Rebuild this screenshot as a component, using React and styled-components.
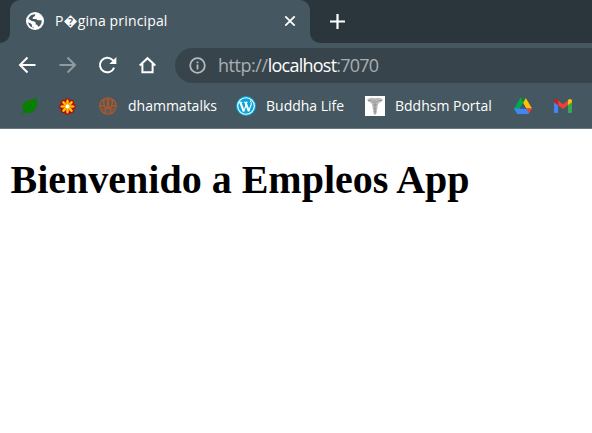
import React from 'react';
import styled, { createGlobalStyle } from 'styled-components';

const Global = createGlobalStyle`
  * { box-sizing: border-box; }
  html, body { margin: 0; background: #fff; overflow: hidden; }
  svg { display: block; flex: none; overflow: visible; }
`;

const Window = styled.div`
  width: 592px;
  height: 433px;
  display: flex;
  flex-direction: column;
  background: #fff;
  font-family: 'Open Sans', 'Noto Sans', sans-serif;
  color: #fff;
`;
const TabStrip = styled.header`
  height: 43px;
  flex: none;
  display: flex;
  background: #455760;
`;
const StripEdge = styled.div`
  width: 10px;
  background: #2b363c;
  border-bottom-right-radius: 10px;
`;
const TabBack = styled.div`
  width: 300px;
  background: linear-gradient(#2b363c 20px, #455760 20px);
`;
const Tab = styled.div`
  height: 43px;
  display: flex;
  align-items: center;
  padding: 0 13px 1px 16px;
  background: #455760;
  border-radius: 10px 10px 0 0;
`;
const StripRest = styled.div`
  flex: 1;
  display: flex;
  align-items: center;
  padding: 0 0 1px 20px;
  background: #2b363c;
  border-bottom-left-radius: 10px;
`;
const Label = styled.span`
  font-size: 14px;
  line-height: 20px;
  white-space: nowrap;
  width: ${p => p.$w}px;
  margin-left: ${p => p.$gap}px;
  letter-spacing: ${p => p.$track || 0}px;
`;
const Spacer = styled.div`flex: 1;`;
const Toolbar = styled.nav`
  height: 45px;
  flex: none;
  display: flex;
  align-items: center;
  padding-left: 17px;
  background: #455760;
`;
const NavButton = styled.button`
  width: 20px;
  height: 20px;
  margin: 0 20px 1px 0;
  padding: 0;
  border: 0;
  background: none;
  color: ${p => (p.$dim ? '#909ba1' : '#fff')};
`;
const AddressBar = styled.div`
  flex: 1;
  height: 35px;
  margin-left: -2px;
  display: flex;
  align-items: center;
  padding-left: 14px;
  background: #38444b;
  border-radius: 18px 0 0 18px;
`;
const Url = styled.span`
  margin-left: 12px;
  padding-bottom: 1px;
  font-size: 18px;
  line-height: 24px;
  color: #a8afb3;
  letter-spacing: -0.45px;
  white-space: nowrap;
`;
const Host = styled.span`
  color: #fff;
  letter-spacing: -0.75px;
`;
const Port = styled.span`letter-spacing: -0.8px;`;
const Bookmarks = styled.div`
  height: 41px;
  flex: none;
  display: flex;
  align-items: center;
  padding: 0 0 4px 20px;
  background: #455760;
  border-bottom: 1px solid #6a7980;
`;
const Bookmark = styled.div`
  display: flex;
  align-items: center;
  margin-right: ${p => p.$after}px;
`;
const Page = styled.main`
  flex: 1;
  padding: 27px 0 0 10.5px;
  color: #000;
`;
const Title = styled.h1`
  margin: 0;
  font: bold 40px/48px 'Liberation Serif', serif;
  white-space: nowrap;
`;

const Globe = () => (
  <svg width="18" height="18" viewBox="0 0 18 18">
    <circle cx="9" cy="9" r="9" fill="#fff" />
    <path fill="#455760" d="M9 2.2C9.7 3 9 4.2 7.8 4.7L6.8 5.3V7H9.4C11 7 11 8 12 8.3H15.6C16 11 14.7 13.2 12.7 14.8 11.6 14.6 12 13.4 11.3 13L9.5 12.3C9.4 11.3 8.7 10.3 7.4 9.6L2.2 8.5C2.4 5 5.2 2.2 9 2.2ZM2.3 10.2L5.7 11.8V13.2L8 14.2V15.7C5 15.4 2.5 13.4 2.3 10.2Z" />
    <path fill="#fff" d="M2.4 6.7 6.2 9.2 8 9.4 9.8 10.6 9.2 12.8 7.3 15.4 6 14.8 6.2 12.6 2 9.4ZM10.1 2.2 9.3 4.9 11 6.3 12.8 7.1 15.6 7.2C15.1 4.7 12.8 2.5 10.1 2.2Z" />
  </svg>
);
const Leaf = () => (
  <svg width="18" height="19" viewBox="0 0 18 19">
    <path fill="#078000" d="M16.6 0C16.4 3.5 17.8 6.5 16.7 9.2 15.8 11.8 14 14 11.8 15.4 9.6 16.5 7.2 16.2 5.4 15.6 4 16.2 2 18 .3 18.7L0 17.7C1.4 17 2.8 16.2 3.9 14.9 2.2 12.2 1.8 9 3 6.6 4.6 3.6 8 3.7 11.2 2.9 13.4 2.3 15 1.5 16.6 0Z" />
    <path stroke="#16601a" strokeWidth=".6" fill="none" d="M4.2 15.2Q8.5 12.3 11.5 8" />
  </svg>
);
const petals = [0, 45, 90, 135, 180, 225, 270, 315];
const Flower = () => (
  <svg width="17" height="17" viewBox="-8.5 -8.5 17 17">
    {petals.map(a => <ellipse key={a} transform={`rotate(${a})`} cy="-5.4" rx="2.6" ry="2.9" fill="#b50808" />)}
    <circle r="6" fill="#b50808" />
    {petals.map(a => <ellipse key={a} transform={`rotate(${a})`} cy="-4.5" rx="1.35" ry="2.7" fill="#ffc400" />)}
    <circle r="3" fill="#ffab10" />
    <circle r="1.9" fill="#fff" />
  </svg>
);
const Emblem = () => (
  <svg width="18" height="18" viewBox="0 0 18 18" fill="none" stroke="#b4582b">
    <path fill="#80573f" stroke="none" d="M2.5 3.5Q9-2 15.5 3.5L17 9Q13 9 11.5 11H6.5Q5 9 1 9Z" />
    <circle cx="9" cy="9" r="8.3" strokeWidth="1.1" />
    <path stroke="#455760" strokeWidth="1.3" d="M7 3Q5.5 6 7 9M11 3Q12.5 6 11 9M3.5 5V8M14.5 5V8" />
    <path strokeWidth="1.1" d="M9 1V10M4.8 2.5Q4 6 5.7 9.5M13.2 2.5Q14 6 12.3 9.5M1 9.5Q4 8.5 6.5 10.8H11.5Q14 8.5 17 9.5M2 12H16M6.2 12V16.5M11.8 12V16.5" />
    <path strokeWidth="1" strokeDasharray="1.5 1" d="M3 14H15M4.5 15.8H13.5" />
  </svg>
);
const WordPress = () => (
  <svg width="20" height="20" viewBox="0 0 20 20">
    <circle cx="10" cy="10" r="10" fill="#0aa5d8" />
    <circle cx="10" cy="10" r="8.3" fill="none" stroke="#fff" strokeWidth="1.1" />
    <g fill="none" stroke="#fff">
      <path strokeWidth="2.1" d="M4.3 6.3 7.7 15.4M9.5 6.3 12.8 15.2" />
      <path strokeWidth="1.1" d="M7.7 15.5 10.3 8.5M12.7 15.5 15.2 8.5Q15.8 6.5 14.2 4.5M2.8 6.2H6.3M7.9 6.2H11.7" />
    </g>
  </svg>
);
const Portal = () => (
  <svg width="20" height="20" viewBox="0 0 20 20">
    <path fill="#fff" d="M0 0H20V20H0Z" />
    <path fill="#bcbcbc" d="M2 3.2Q6 .8 10 2.2 14 .8 18 3.2L16.5 5.8Q13.4 6.2 12.8 9L11.5 17.5 10 19 8.6 17.5 7.2 9Q6.6 6.2 3.5 5.8Z" />
    <path fill="none" stroke="#8e8e8e" strokeWidth=".8" d="M3 4.5Q7 3.5 9 6.5M17 4.5Q13 3.5 11 6.5M10 4V18M7.8 9.5 12 8.5M8.3 13 11.6 12M9 16 11 15" />
  </svg>
);
const Drive = () => (
  <svg width="18" height="16" viewBox="0 0 18 16">
    <path fill="#00a94f" d="M6.2 0H9L11.9.1 3 15.6 0 10.6Z" />
    <path fill="#ffc107" d="M6.2 0H11.8L18 10.6H12.2Z" />
    <path fill="#4285f4" d="M3 10.6H15L14.8 16H3.2L0 10.6Z" />
    <path fill="#455760" d="M9 5.1 12.1 10.6H5.9Z" />
    <path fill="#ea4335" d="M12.2 10.6H18L15 15.6Z" />
    <path fill="#08833d" d="M6.2 0H11.8L9 5.1Z" />
  </svg>
);
const Gmail = () => (
  <svg width="18" height="14" viewBox="0 0 18 14">
    <path fill="#4285f4" d="M0 3 4.1 6V14H1.3Q0 14 0 12.7Z" />
    <path fill="#34a853" d="M18 3 13.9 6V14H16.7Q18 14 18 12.7Z" />
    <path fill="#ea4335" d="M4.1 1.5 9 5.2 13.9 1.5V6.3L9 10 4.1 6.3Z" />
    <path fill="#c5221f" d="M0 2C0 0 2.1-.7 4.1 1V6.3L0 3.2Z" />
    <path fill="#fbbc04" d="M18 2C18 0 15.9-.7 13.9 1V6.3L18 3.2Z" />
  </svg>
);

export default function App() {
  return (
    <Window>
      <Global />
      <TabStrip>
        <StripEdge />
        <TabBack>
          <Tab>
            <Globe />
            <Label $w={130} $gap={11} $track={0.15}>P{'\uFFFD'}gina principal</Label>
            <Spacer />
            <svg width="14" height="14" viewBox="0 0 14 14" stroke="#fff" strokeWidth="1.8"><path d="M2.3 2.3 11.7 11.7M11.7 2.3 2.3 11.7" /></svg>
          </Tab>
        </TabBack>
        <StripRest>
          <svg width="15" height="15" viewBox="0 0 15 15" stroke="#fff" strokeWidth="2.2"><path d="M0 7.5H15M7.5 0V15" /></svg>
        </StripRest>
      </TabStrip>
      <Toolbar>
        <NavButton aria-label="Back">
          <svg width="20" height="20" viewBox="0 0 20 20" fill="none" stroke="currentColor" strokeWidth="2"><path d="M18.5 10H3.5M10.5 2.5 3 10 10.5 17.5" /></svg>
        </NavButton>
        <NavButton $dim aria-label="Forward">
          <svg width="20" height="20" viewBox="0 0 20 20" fill="none" stroke="currentColor" strokeWidth="2"><path d="M2.5 10H17.5M10.5 2.5 18 10 10.5 17.5" /></svg>
        </NavButton>
        <NavButton aria-label="Reload">
          <svg width="20" height="20" viewBox="0 0 20 20" fill="none" stroke="currentColor" strokeWidth="2"><path d="M17.1 12.6A7.3 7.3 0 1 1 15.5 4.9L17.5 7" /><path fill="currentColor" stroke="none" d="M19.4 2V9H12.4Z" /></svg>
        </NavButton>
        <NavButton aria-label="Home">
          <svg width="20" height="20" viewBox="0 0 20 20" fill="none" stroke="currentColor" strokeWidth="2"><path d="M2.7 10.6 10.5 3.2 18.3 10.6M5.4 8.8V17.3H15.6V8.8" /></svg>
        </NavButton>
        <AddressBar>
          <svg width="17" height="17" viewBox="0 0 17 17" fill="none" stroke="#b3babd" strokeWidth="1.8"><circle cx="8.5" cy="8.5" r="7.3" /><path d="M8.5 7.5V12.5M8.5 4.4V6.2" /></svg>
          <Url>http://<Host>localhost</Host><Port>:7070</Port></Url>
        </AddressBar>
      </Toolbar>
      <Bookmarks>
        <Bookmark $after={21}><Leaf /></Bookmark>
        <Bookmark $after={23}><Flower /></Bookmark>
        <Bookmark $after={20}><Emblem /><Label $w={88} $gap={11}>dhammatalks</Label></Bookmark>
        <Bookmark $after={20}><WordPress /><Label $w={79} $gap={10}>Buddha Life</Label></Bookmark>
        <Bookmark $after={22}><Portal /><Label $w={97} $gap={10}>Bddhsm Portal</Label></Bookmark>
        <Bookmark $after={22}><Drive /></Bookmark>
        <Bookmark $after={0}><Gmail /></Bookmark>
      </Bookmarks>
      <Page><Title>Bienvenido a Empleos App</Title></Page>
    </Window>
  );
}
